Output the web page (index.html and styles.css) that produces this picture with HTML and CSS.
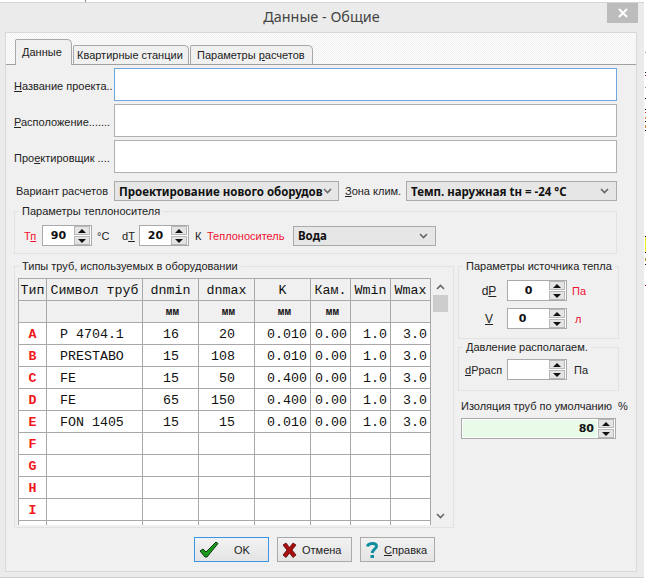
FILE: index.html
```html
<!DOCTYPE html>
<html lang="ru">
<head>
    <meta charset="UTF-8">
    <title>Данные - Общие</title>
    <link rel="stylesheet" href="styles.css">
</head>
<body>
    <div class="strip"><span class="strip-tick"></span></div>
    <div class="desk-edge"></div>
    <div class="window">
        <div class="titlebar">
            <div class="title">Данные - Общие</div>
            <div class="close">
                <svg width="12" height="10" viewBox="0 0 12 10"><path d="M2 1l8 8M10 1l-8 8" stroke="#fff" stroke-width="2" fill="none"/></svg>
            </div>
        </div>
        <div class="client">
            <div class="tabs">
                <div class="tab active"><u>Д</u>анные</div>
                <div class="tab">Квартирные станции</div>
                <div class="tab">Параметры <u>р</u>асчетов</div>
            </div>
            <div class="page">
                <div class="field">
                    <label class="field-label"><u>Н</u>азвание проекта..</label>
                    <div class="textbox focus"></div>
                </div>
                <div class="field">
                    <label class="field-label"><u>Р</u>асположение.......</label>
                    <div class="textbox"></div>
                </div>
                <div class="field">
                    <label class="field-label">Про<u>е</u>ктировщик ....</label>
                    <div class="textbox"></div>
                </div>
                <div class="variant">
                    <label class="variant-label">Вариант расчетов</label>
                    <div class="combo combo-variant"><span>Проектирование нового оборудов</span><svg class="chev" width="9" height="6" viewBox="0 0 9 6"><path d="M1 1l3.500 3.500L8 1" stroke="#666" stroke-width="1.600" fill="none"/></svg></div>
                    <label class="zone-label"><u>З</u>она клим.</label>
                    <div class="combo combo-zone"><span>Темп. наружная tн = -24 °C</span><svg class="chev" width="9" height="6" viewBox="0 0 9 6"><path d="M1 1l3.500 3.500L8 1" stroke="#666" stroke-width="1.600" fill="none"/></svg></div>
                </div>

                <fieldset class="group group-heat">
                    <legend>Параметры теплоносителя</legend>
                    <div class="heat-row">
                        <span class="red tp-label">Т<u>п</u></span>
                        <div class="spin spin-small"><span class="spin-val">90</span><div class="spin-btns"><i class="up"></i><i class="down"></i></div></div>
                        <span class="unit-c">°C</span>
                        <span class="dt-label">d<u>T</u></span>
                        <div class="spin spin-small"><span class="spin-val">20</span><div class="spin-btns"><i class="up"></i><i class="down"></i></div></div>
                        <span class="unit-k">К</span>
                        <span class="red carrier-label">Теплоноситель</span>
                        <div class="combo combo-carrier"><span>Вода</span><svg class="chev" width="9" height="6" viewBox="0 0 9 6"><path d="M1 1l3.500 3.500L8 1" stroke="#666" stroke-width="1.600" fill="none"/></svg></div>
                    </div>
                </fieldset>

                <div class="lower">
                    <fieldset class="group group-pipes">
                        <legend>Типы труб, используемых в оборудовании</legend>
                        <div class="grid-wrap">
                            <table class="pipes">
                                <colgroup>
                                    <col class="c-type"><col class="c-sym"><col class="c-num"><col class="c-num"><col class="c-num"><col class="c-kam"><col class="c-kam"><col class="c-kam">
                                </colgroup>
                                <thead>
                                    <tr><th>Тип</th><th>Символ труб</th><th>dnmin</th><th>dnmax</th><th>K</th><th>Кам.</th><th>Wmin</th><th>Wmax</th></tr>
                                    <tr class="units"><th></th><th></th><th>мм</th><th>мм</th><th>мм</th><th class="kam-unit">мм</th><th></th><th></th></tr>
                                </thead>
                                <tbody>
                                    <tr><td class="key">A</td><td class="sym">P 4704.1</td><td class="dn">16</td><td class="dn">20</td><td class="num">0.010</td><td class="num">0.00</td><td class="num">1.0</td><td class="num">3.0</td></tr>
                                    <tr><td class="key">B</td><td class="sym">PRESTABO</td><td class="dn">15</td><td class="dn">108</td><td class="num">0.010</td><td class="num">0.00</td><td class="num">1.0</td><td class="num">3.0</td></tr>
                                    <tr><td class="key">C</td><td class="sym">FE</td><td class="dn">15</td><td class="dn">50</td><td class="num">0.400</td><td class="num">0.00</td><td class="num">1.0</td><td class="num">3.0</td></tr>
                                    <tr><td class="key">D</td><td class="sym">FE</td><td class="dn">65</td><td class="dn">150</td><td class="num">0.400</td><td class="num">0.00</td><td class="num">1.0</td><td class="num">3.0</td></tr>
                                    <tr><td class="key">E</td><td class="sym">FON 1405</td><td class="dn">15</td><td class="dn">15</td><td class="num">0.010</td><td class="num">0.00</td><td class="num">1.0</td><td class="num">3.0</td></tr>
                                    <tr><td class="key">F</td><td></td><td></td><td></td><td></td><td></td><td></td><td></td></tr>
                                    <tr><td class="key">G</td><td></td><td></td><td></td><td></td><td></td><td></td><td></td></tr>
                                    <tr><td class="key">H</td><td></td><td></td><td></td><td></td><td></td><td></td><td></td></tr>
                                    <tr><td class="key">I</td><td></td><td></td><td></td><td></td><td></td><td></td><td></td></tr>
                                    <tr><td class="key"></td><td></td><td></td><td></td><td></td><td></td><td></td><td></td></tr>
                                </tbody>
                            </table>
                            <div class="scrollbar">
                                <svg width="9" height="6" viewBox="0 0 9 6"><path d="M1 5l3.500-3.500L8 5" stroke="#666" stroke-width="1.600" fill="none"/></svg>
                                <div class="thumb"></div>
                                <svg class="scroll-down" width="9" height="6" viewBox="0 0 9 6"><path d="M1 1l3.500 3.500L8 1" stroke="#666" stroke-width="1.600" fill="none"/></svg>
                            </div>
                        </div>
                    </fieldset>

                    <div class="side">
                        <fieldset class="group group-source">
                            <legend>Параметры источника тепла</legend>
                            <div class="source-row">
                                <span class="source-label">d<u>P</u></span>
                                <div class="spin spin-wide"><span class="spin-val">0</span><div class="spin-btns"><i class="up"></i><i class="down"></i></div></div>
                                <span class="red">Па</span>
                            </div>
                            <div class="source-row">
                                <span class="source-label"><u>V</u></span>
                                <div class="spin spin-wide"><span class="spin-val spin-val-left">0</span><div class="spin-btns"><i class="up"></i><i class="down"></i></div></div>
                                <span class="red unit-l">л</span>
                            </div>
                        </fieldset>
                        <fieldset class="group group-avail">
                            <legend>Давление располагаем.</legend>
                            <div class="avail-row">
                                <span class="avail-label"><u>d</u>Ррасп</span>
                                <div class="spin spin-wide"><span class="spin-val"></span><div class="spin-btns"><i class="up"></i><i class="down"></i></div></div>
                                <span>Па</span>
                            </div>
                        </fieldset>
                        <div class="insul-label">Изоляция труб по умолчанию&nbsp; %</div>
                        <div class="spin spin-insul"><span class="spin-val">80</span><div class="spin-btns"><i class="up"></i><i class="down"></i></div></div>
                    </div>
                </div>

                <div class="buttons">
                    <div class="btn btn-default">
                        <svg width="20" height="17" viewBox="0 0 20 17"><path d="M1 10l3-2 3 3L17 1l2 1.500L8 16H6z" fill="#1c9a1c" stroke="#0a3a12" stroke-width="1"/></svg>
                        <span class="btn-ok">OK</span>
                    </div>
                    <div class="btn">
                        <svg width="15" height="16" viewBox="0 0 15 16"><path d="M1 3l3-2 3.500 4.500L11 1l3 2-4 5 4 5-3 2.500-3.500-4.500L4 15.500 1 13l4-5z" fill="#a80f0f" stroke="#5a0808" stroke-width=".8"/></svg>
                        <span>Отмена</span>
                    </div>
                    <div class="btn">
                        <svg width="14" height="18" viewBox="0 0 14 18"><path d="M2.500 5.500C3 2 11 1 11.500 5c.3 2.500-4 3.500-4.300 7" stroke="#0d8fa0" stroke-width="3" fill="none"/><path d="M5.500 14h3.500v3H5.500z" fill="#0d8fa0"/></svg>
                        <span><u>С</u>правка</span>
                    </div>
                </div>
            </div>
        </div>
    </div>
</body>
</html>
```

FILE: styles.css
```css
html, body {
    margin: 0;
    height: 579px;
    overflow: hidden;
}
body {
    background: #fff;
    font-family: "Liberation Sans", Roboto, sans-serif;
    font-size: 11px;
    color: #222;
    position: relative;
}
u {
    text-underline-offset: 1px;
}
.strip {
    height: 2px;
}
.strip-tick {
    display: block;
    width: 1px;
    height: 2px;
    margin-left: 85px;
    background: #888;
}
/* bits of the window behind the dialog */
.desk-edge {
    position: absolute;
    top: 0;
    right: 0;
    width: 1px;
    height: 300px;
    background: linear-gradient(#fff 52px, #999 52px 53px, #fff 53px 72px, #111 72px 73px, #fff 73px 75px, #811 75px 76px,
        #fff 76px 87px, #999 87px 88px, #fff 88px 98px, #111 98px 99px, #fff 99px 109px, #111 109px 110px, #fff 110px 112px,
        #d22 112px 113px, #fff 113px 117px, #e0912a 117px 119px, #fff 119px 121px, #111 121px 122px, #fff 122px 125px,
        #c8842a 125px 128px, #fff 128px 130px, #111 130px 131px, #fff 131px 236px, #111 236px 237px, #f5ee20 237px 252px,
        #111 252px 253px, #fff 253px 258px, #aa9933 258px 261px, #fff 261px 264px, #111 264px 265px, #fff 265px 285px,
        #b11 285px 286px, #fff 286px);
}
.window {
    width: 644px;
    height: 576px;
    box-sizing: border-box;
    padding: 0 7px 0 5px;
    background: #ebebeb;
    border-top: 1px solid #d4d4d4;
    border-bottom: 1px solid #cfcfcf;
}
.titlebar {
    display: flex;
    height: 29px;
    position: relative;
}
.title {
    flex: 1;
    padding-top: 4px;
    padding-left: 1px;
    text-align: center;
    font-family: "Noto Sans", sans-serif;
    font-size: 14.4px;
    line-height: 20px;
    color: #444;
}
.close {
    position: absolute;
    top: 0;
    right: -1px;
    width: 31px;
    height: 20px;
    background: #bcbcbc;
    display: flex;
    align-items: center;
    justify-content: center;
}
.client {
    height: 540px;
    box-sizing: border-box;
    background: #f0f0f0;
    border: 1px solid #d8d8d8;
}
.tabs {
    display: flex;
    align-items: flex-end;
    height: 31px;
    padding-left: 9px;
    border-bottom: 1px solid #a0a0a0;
    background: repeating-conic-gradient(#f2f2f2 0 25%, #fcfcfc 0 50%) 0 0 / 2px 2px;
}
.tab {
    height: 19px;
    box-sizing: border-box;
    padding: 2px 0 0 3px;
    margin-right: 1px;
    border: 1px solid #a8a8a8;
    border-bottom: 0;
    border-radius: 2px 5px 0 0;
    background: #f0f0f0;
    line-height: 15px;
    white-space: nowrap;
}
.tab:nth-child(2) { width: 116px; }
.tab:nth-child(3) { width: 123px; margin-right: 0; padding-left: 6px; }
.tab.active {
    width: 57px;
    height: 26px;
    margin-bottom: -1px;
    padding: 5px 0 0 6px;
}
.page {
    padding: 3px 19px 0 8px;
}
.field {
    display: flex;
    align-items: center;
    margin-bottom: 3px;
}
.field-label {
    width: 100px;
    white-space: nowrap;
    padding-top: 2px;
}
.textbox {
    flex: 1;
    height: 33px;
    box-sizing: border-box;
    background: #fff;
    border: 1px solid #b0b0b0;
}
.textbox.focus {
    border-color: #6ea8dc;
}
.variant {
    display: flex;
    align-items: center;
    margin-top: 8px;
}
.variant-label {
    width: 98px;
    padding-left: 2px;
}
.zone-label {
    width: 61px;
    margin-left: 6px;
}
.combo {
    height: 20px;
    box-sizing: border-box;
    display: flex;
    align-items: center;
    justify-content: space-between;
    padding: 0 7px 0 4px;
    border: 1px solid #aaa;
    background: #e6e6e6;
    font-family: "Noto Sans", sans-serif;
    font-size: 11.5px;
    font-weight: bold;
    color: #111;
    overflow: hidden;
    white-space: nowrap;
}
.combo .chev { flex: none; }
.combo-variant { width: 225px; }
.combo-zone { width: 211px; }
.combo-carrier { width: 143px; }
.group {
    margin: 0;
    padding: 0;
    border: 1px solid #e2e2e2;
    min-width: 0;
}
.group legend {
    margin-left: 4px;
    padding: 0 3px;
    line-height: 13px;
    white-space: nowrap;
}
.group-heat {
    margin-top: 4px;
    height: 49px;
    box-sizing: border-box;
}
.heat-row {
    display: flex;
    align-items: center;
    padding-left: 9px;
    margin-top: 7px;
}
.red {
    color: #f01030;
}
.tp-label { width: 18px; }
.unit-c { width: 25px; margin-left: 5px; }
.dt-label { width: 17px; }
.unit-k { margin-left: 6px; width: 12px; }
.carrier-label { width: 86px; }
.spin {
    display: flex;
    flex: none;
    height: 21px;
    box-sizing: border-box;
    border: 1px solid #aaa;
    background: #fff;
    font-family: "DejaVu Sans", sans-serif;
    font-size: 11px;
    font-weight: bold;
    color: #111;
}
.spin-small { width: 50px; }
.spin-wide { width: 60px; }
.spin-val {
    flex: 1;
    text-align: center;
    line-height: 19px;
}
.spin-val-left {
    padding-right: 12px;
}
.spin-btns {
    width: 17px;
    display: flex;
    flex-direction: column;
    gap: 1px;
    background: #fff;
    padding-right: 1px;
    box-sizing: border-box;
}
.spin-btns i {
    flex: 1;
    display: flex;
    align-items: center;
    justify-content: center;
    background: #e4e4e4;
    border: 1px solid #b8b8b8;
}
.spin-btns i::after {
    content: "";
    border-left: 4px solid transparent;
    border-right: 4px solid transparent;
}
.spin-btns .up::after { border-bottom: 4px solid #111; }
.spin-btns .down::after { border-top: 4px solid #111; }
.lower {
    display: flex;
    gap: 4px;
    margin-top: 6px;
}
.group-pipes {
    flex: none;
    width: 440px;
    height: 268px;
    box-sizing: border-box;
}
.grid-wrap {
    display: flex;
    height: 247px;
    margin: 5px 0 0 3px;
    overflow: hidden;
}
.pipes {
    width: 413px;
    height: 247px;
    table-layout: fixed;
    border-collapse: collapse;
    font-family: "Liberation Mono", monospace;
    font-size: 13.300px;
    color: #111;
    background: #fff;
    border-left: 1px solid #a8a8a8;
    border-top: 1px solid #a8a8a8;
}
.c-type { width: 28px; }
.c-sym { width: 96px; }
.c-num { width: 56px; }
.c-kam { width: 40px; }
.pipes th, .pipes td {
    height: 21px;
    padding: 1px 0 0;
    box-sizing: border-box;
    border: 1px solid #a8a8a8;
    border-left: 0;
    border-top: 0;
    text-align: center;
    white-space: nowrap;
    overflow: hidden;
}
.pipes tr {
    height: 22px;
}
.pipes th {
    background: #f0f0f0;
    font-weight: normal;
}
.pipes .units th {
    font-size: 11px;
    text-align: right;
    padding-right: 19px;
    font-weight: bold;
}
.pipes .units th.kam-unit {
    padding-right: 11px;
}
.pipes td.key {
    color: #f01818;
    font-weight: bold;
}
.pipes td.sym {
    text-align: left;
    padding-left: 13px;
}
.pipes td.dn {
    text-align: right;
    padding-right: 19px;
}
.pipes td.num {
    text-align: right;
    padding-right: 3px;
}
.scrollbar {
    width: 16px;
    margin-left: 1px;
    background: #f0f0f0;
    display: flex;
    flex-direction: column;
    align-items: center;
    padding-top: 6px;
    box-sizing: border-box;
}
.thumb {
    width: 15px;
    height: 17px;
    margin-top: 5px;
    background: #cdcdcd;
}
.scroll-down {
    margin-top: auto;
    margin-bottom: 6px;
}
.side {
    flex: none;
    width: 161px;
}
.group-source {
    height: 79px;
    box-sizing: border-box;
}
.source-row {
    display: flex;
    align-items: center;
    margin: 7px 0;
}
.source-label {
    width: 48px;
    box-sizing: border-box;
    padding-left: 12px;
    text-align: center;
    font-size: 12px;
}
.source-row .red {
    margin-left: 5px;
}
.source-row .unit-l {
    margin-left: 8px;
}
.group-avail {
    height: 50px;
    margin-top: 2px;
    box-sizing: border-box;
}
.avail-row {
    display: flex;
    align-items: center;
    margin-top: 5px;
}
.avail-label {
    width: 48px;
    padding-left: 6px;
    box-sizing: border-box;
}
.avail-row span:last-child {
    margin-left: 7px;
}
.insul-label {
    margin: 8px 0 0 3px;
    line-height: 15px;
    white-space: nowrap;
}
.spin-insul {
    width: 155px;
    margin: 4px 0 0 3px;
}
.spin-insul .spin-val {
    background: #e8fbe8;
    text-align: right;
    padding-right: 3px;
    margin: 1px;
    line-height: 17px;
}
.buttons {
    display: flex;
    gap: 8px;
    margin: 9px 0 0 180px;
}
.btn {
    width: 75px;
    height: 25px;
    box-sizing: border-box;
    display: flex;
    align-items: center;
    gap: 5px;
    padding-left: 4px;
    border: 1px solid #aaa;
    background: linear-gradient(#f2f2f2, #e4e4e4);
}
.btn-default {
    border-color: #3c96e6;
}
.btn-ok {
    margin-left: 10px;
}
```
